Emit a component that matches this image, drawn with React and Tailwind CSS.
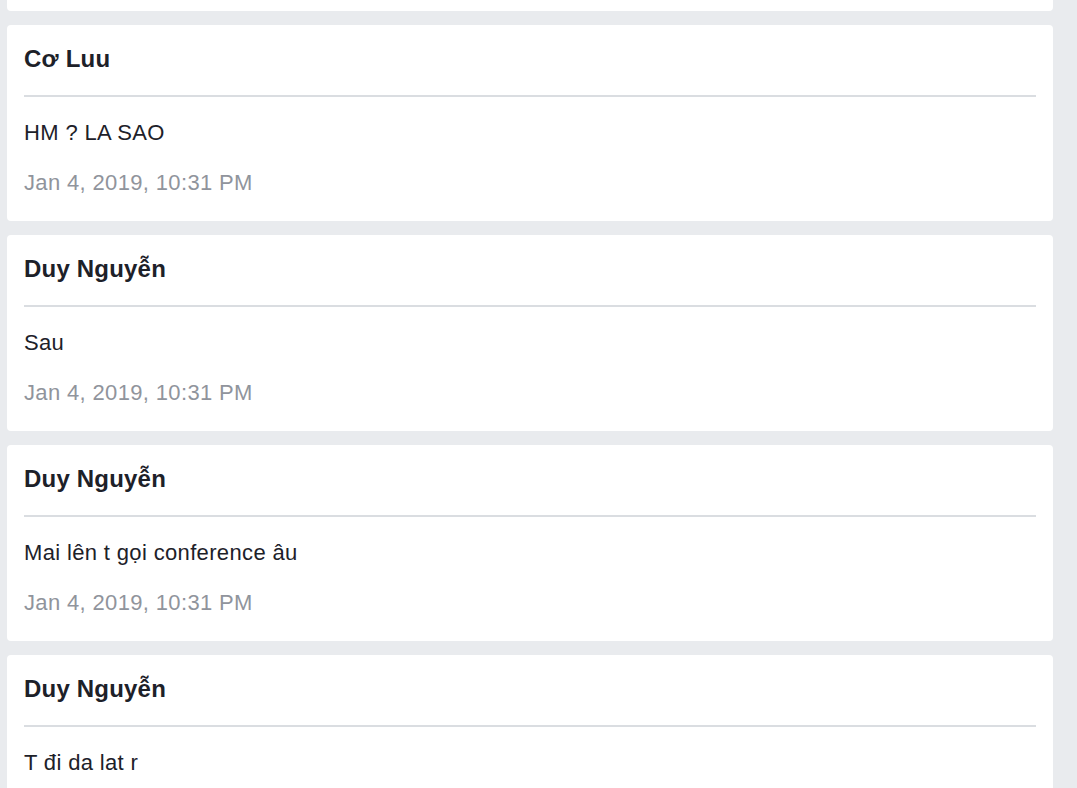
const messages = [
  { id: 1, author: "Duy Nguyễn", text: "Ok", time: "Jan 4, 2019, 10:30 PM" },
  { id: 2, author: "Cơ Luu", text: "HM ? LA SAO", time: "Jan 4, 2019, 10:31 PM" },
  { id: 3, author: "Duy Nguyễn", text: "Sau", time: "Jan 4, 2019, 10:31 PM" },
  { id: 4, author: "Duy Nguyễn", text: "Mai lên t gọi conference âu", time: "Jan 4, 2019, 10:31 PM" },
  { id: 5, author: "Duy Nguyễn", text: "T đi da lat r", time: "Jan 4, 2019, 10:31 PM" },
];

const MessageCard = ({ author, text, time }) => {
  return (
    <div className="bg-white rounded-[4px] px-[17px] pt-[21px] pb-[26px]">
      <div className="text-[24px] leading-[25px] font-bold tracking-[0.2px] text-[#1d2129]">
        {author}
      </div>
      <div className="h-[2px] bg-[#dadde1] mt-[24px]" />
      <div className="text-[22px] leading-[25px] tracking-[0.35px] text-[#1d2129] mt-[23px]">
        {text}
      </div>
      <div className="text-[22px] leading-[25px] tracking-[0.35px] text-[#90949c] mt-[25px]">
        {time}
      </div>
    </div>
  );
};

const App = () => {
  return (
    <div
      className="h-[788px] overflow-hidden bg-[#e9ebee]"
      style={{ fontFamily: '"Liberation Sans", Arial, sans-serif' }}
    >
      <div className="flex flex-col gap-[14px] ml-[7px] w-[1046px] -mt-[185px]">
        {messages.map((m) => (
          <MessageCard key={m.id} {...m} />
        ))}
      </div>
    </div>
  );
};

export default App;
